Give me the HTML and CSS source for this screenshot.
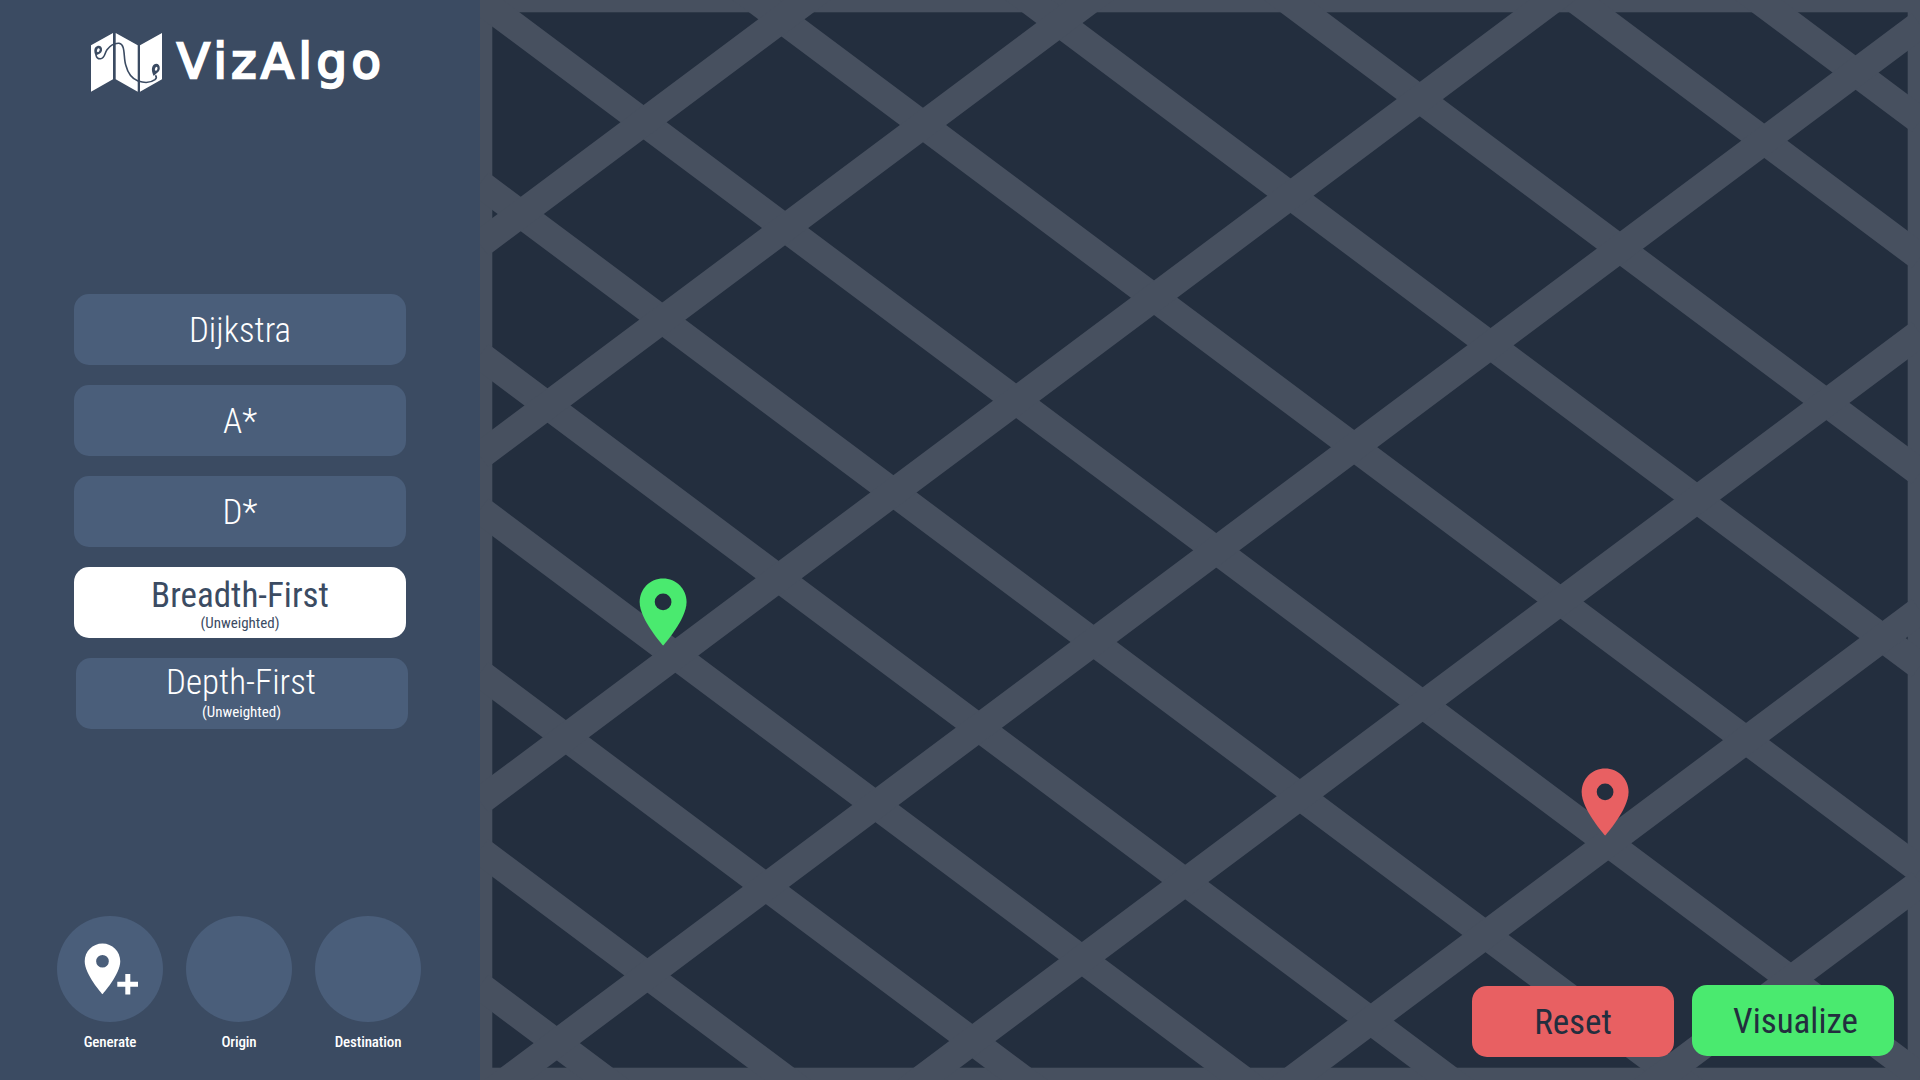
FILE: index.html
```
<!DOCTYPE html>
<html lang="en">
<head>
<meta charset="utf-8">
<title>VizAlgo</title>
<link rel="stylesheet" href="styles.css">
</head>
<body>
<div class="app">
  <aside class="sidebar">
    <header class="brand">
      <svg class="brand-icon" viewBox="0 0 71 59" width="71" height="59">
        <path fill="#fff" d="M0 12.3 22 0v46.3L0 58.7zM24.7 0l22 12.3v46.4l-22-12.4zM49 12.3 71 0v46.3L49 58.7z"/>
        <path class="trail" d="M5 22c.5 2.500 2 4 4.500 3.800 4.500-.3 4-5.800 6.500-9 3-4 7-6.800 12-6.500 7 1 4 14.500 7 22.500 2 8 6.500 13 12 15.300 6 1.800 13 1.600 17-1.400 1.800-1.500 2-2.500.5-4.500"/>
        <g class="trail-pin">
          <path d="M4.500 22.500C2.500 18 3 14.500 6 13.200c3-1.200 5.500 1 5 4.200-.5 2.600-3 3.800-6.500 5.100z"/><ellipse cx="7.300" cy="17.300" rx="1.300" ry="2" transform="rotate(25 7.300 17.300)"/>
          <path d="M62.800 43C60.500 38.500 60 34 63 31.400c3-1.800 6 .3 5.800 4-.3 3.600-3.600 4.600-6 7.600z"/><ellipse cx="65.200" cy="35.800" rx="1.200" ry="2" transform="rotate(20 65.200 35.800)"/>
        </g>
      </svg>
      <span class="brand-name">VizAlgo</span>
    </header>
    <nav class="algorithms">
      <button class="algo">Dijkstra</button>
      <button class="algo">A*</button>
      <button class="algo">D*</button>
      <button class="algo active">Breadth-First<small>(Unweighted)</small></button>
      <button class="algo depth">Depth-First<small>(Unweighted)</small></button>
    </nav>
    <div class="tools">
      <div class="tool"><span class="disc">
        <svg viewBox="0 0 106 106" width="106" height="106" fill="#fff">
          <path transform="translate(15 22.400) scale(2.540)" d="M12 2C8.130 2 5 5.130 5 9c0 5.250 7 13 7 13s7-7.750 7-13c0-3.870-3.130-7-7-7zm0 9.500a2.500 2.500 0 1 1 0-5 2.500 2.500 0 0 1 0 5z"/>
          <path d="M60.300 65.700h8v-7.700h5v7.700h7.700v5h-7.700v7.800h-5v-7.800h-8z"/>
        </svg></span><span>Generate</span></div>
      <div class="tool"><span class="disc"></span><span>Origin</span></div>
      <div class="tool"><span class="disc"></span><span>Destination</span></div>
    </div>
  </aside>
  <main class="map">
    <svg class="streets" viewBox="480 0 1440 1080" width="1440" height="1080">
      <rect class="ground" x="492.300" y="12.300" width="1415.400" height="1055.400"/>
      <g class="roads">
        <!-- streets running down to the right -->
        <path d="M480-955.400 1920 120.700M480-818.900 1920 257.200M480-603.200 1920 472.900M480-410 1920 666.100M480-206 1920 870.100M480 .1 1920 1076.200M480 183.500 1920 1259.600M480 355 1920 1431.100M480 509.500 1920 1585.600M480 673.200 1920 1749.300M480 850.300 1920 1926.400M480 985.800 1920 2061.900"/>
        <!-- streets running up to the right -->
        <path d="M480 244.500 1920-831.600M480 456 1920-620.100M480 801.400 1920-274.700M480 1100.500 1920 24.400M480 1409 1920 332.900M480 1686.300 1920 610.200M480 1959.200 1920 883.100"/>
      </g>
      <g class="pin origin" transform="translate(622.900 571.800) scale(3.350)">
        <path d="M12 2C8.130 2 5 5.130 5 9c0 5.250 7 13 7 13s7-7.750 7-13c0-3.870-3.130-7-7-7z"/><circle cx="12" cy="9" r="2.500"/>
      </g>
      <g class="pin destination" transform="translate(1564.900 761.800) scale(3.350)">
        <path d="M12 2C8.130 2 5 5.130 5 9c0 5.250 7 13 7 13s7-7.750 7-13c0-3.870-3.130-7-7-7z"/><circle cx="12" cy="9" r="2.500"/>
      </g>
    </svg>
    <div class="actions">
      <button class="action reset">Reset</button>
      <button class="action visualize">Visualize</button>
    </div>
  </main>
</div>
</body>
</html>
```
FILE: styles.css
```
* { box-sizing: border-box; }
body { margin: 0; font-family: "Roboto Condensed", Roboto, sans-serif; font-stretch: condensed; }
button { border: 0; margin: 0; padding: 0; font: inherit; font-stretch: condensed; color: inherit; }
.app { display: flex; width: 1920px; height: 1080px; overflow: hidden; }
.sidebar { width: 480px; height: 1080px; background: #3b4b62; color: #fff; display: flex; flex-direction: column; }
.brand { display: flex; height: 294px; padding: 33px 0 0 91px; gap: 15px; }
.brand-icon { flex: none; }
.brand-name { font: 48px/57px "DejaVu Sans", sans-serif; letter-spacing: 4.6px; -webkit-text-stroke: 2.4px #fff; white-space: nowrap; }
.trail { fill: none; stroke: #3b4b62; stroke-width: 1.6; }
.trail-pin path { fill: #3b4b62; }
.trail-pin ellipse { fill: #fff; }
.algorithms { display: flex; flex-direction: column; gap: 20px; padding-left: 74px; }
.algo { width: 332px; height: 71px; border-radius: 15px; background: #4a5e7a; font-size: 35px; font-weight: 300; line-height: 41px; padding-top: 2px; }
.algo small { display: block; font-size: 15px; line-height: 15px; font-weight: 400; }
.algo.active { background: #fff; color: #3b4b62; font-weight: 400; padding-top: 0; }
.algo.depth { margin-left: 2px; padding: 0 2px 4px 0; }
.algo.depth small { line-height: 18px; padding-left: 1px; }
.tools { display: flex; gap: 23px; margin-top: auto; padding: 0 0 28px 57px; }
.tool { width: 106px; display: flex; flex-direction: column; align-items: center; gap: 10px; font-size: 15px; line-height: 20px; font-weight: 500; letter-spacing: -0.12px; }
.disc { width: 106px; height: 106px; border-radius: 50%; background: #4a5e7a; }
.disc svg { display: block; }
.map { position: relative; width: 1440px; height: 1080px; background: #47505f; }
.streets { display: block; }
.ground { fill: #232e3e; }
.roads { fill: none; stroke: #47505f; stroke-width: 27.7; }
.pin circle { fill: #232e3e; }
.origin { fill: #4aea6f; }
.destination { fill: #e86062; }
.actions { position: absolute; right: 26px; bottom: 23px; display: flex; gap: 18px; }
.action { width: 202px; height: 71px; border-radius: 15px; color: #232e3e; font-size: 35px; padding-top: 2px; }
.reset { background: #e86062; }
.visualize { background: #4aea6f; margin-bottom: 1px; margin-top: -1px; padding-left: 5px; }
```
